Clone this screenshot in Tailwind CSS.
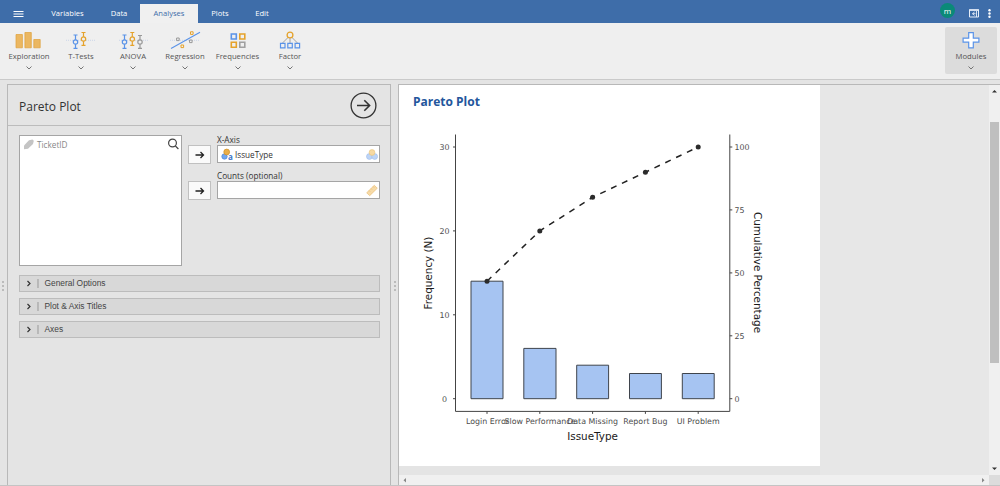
<!DOCTYPE html>
<html lang="en">
<head>
    <meta charset="UTF-8">
    <meta name="viewport" content="width=device-width, initial-scale=1.0">
    <title>Pareto Plot</title>
    <script src="https://cdn.jsdelivr.net/npm/@tailwindcss/browser@4"></script>
</head>
<body class="flex flex-col w-[1000px] h-[486px] overflow-hidden bg-[#e4e4e4] font-['Open_Sans',sans-serif] text-[#333]">

    <!-- Top bar -->
    <header class="flex h-[23px] shrink-0 bg-[#3e6da9] text-white text-[7.6px] font-medium leading-[19px]">
        <svg class="w-[37px] h-[23px]" viewBox="0 0 37 23" stroke="#fff" stroke-width="1.1"><path d="M13.500 11.500h10M13.500 14h10M13.500 16.500h10"/></svg>
        <nav class="flex pt-1">
            <span class="w-[61px] text-center">Variables</span>
            <span class="w-[42px] text-center">Data</span>
            <span class="w-[58px] text-center bg-[#f0f0f0] text-[#3e6da9]">Analyses</span>
            <span class="w-[44px] text-center">Plots</span>
            <span class="w-[40px] text-center">Edit</span>
        </nav>
        <div class="ml-auto flex">
            <div class="mt-[3px] mr-[11px] size-[15px] rounded-full bg-[#0a8a78] text-center text-[8px] leading-[15px]">m</div>
            <svg class="w-[34px] h-[23px]" viewBox="966 0 34 23" fill="none" stroke="#e6eef8">
                <path d="M969.500 10h9v7h-9z"/><path d="M969 10h10" stroke-width="1.500"/><path d="M976.500 11v6M974.500 12l-2 1.700 2 1.700M972.500 13.700h3" stroke-width=".9"/>
                <g fill="#fff" stroke="none"><circle cx="989.500" cy="10.200" r="1.200"/><circle cx="989.500" cy="13.500" r="1.200"/><circle cx="989.500" cy="16.800" r="1.200"/></g>
            </svg>
        </div>
    </header>

    <!-- Ribbon -->
    <div class="flex h-[57px] shrink-0 bg-[#efefef] border-b border-[#cacaca] pl-[3px] pr-[3px] pt-1 text-[7.7px] leading-[12px] text-[#555]">
        <div class="flex flex-col items-center w-[52px] pt-[3px]">
            <svg class="w-8 h-5" viewBox="0 0 32 20" fill="#ebb761" stroke="#e0a03a" stroke-width=".7"><path d="M3 4.500h6.400v13.300H3zM11.900 2.500h6.400v15.300h-6.400zM20.800 9.500h6.400v8.300h-6.400z"/></svg>
            <span>Exploration</span>
            <svg class="w-2 h-3 -mt-px" viewBox="0 0 8 12" fill="none" stroke="#666" stroke-width=".9"><path d="M1.500 5.500 4 8l2.500-2.500"/></svg>
        </div>
        <div class="flex flex-col items-center w-[52px] pt-[3px]">
            <svg class="w-8 h-5" viewBox="0 0 32 20" fill="none" stroke-width="1.200">
                <path d="M1 10.300h30" stroke="#b4c5e2" stroke-width=".6" stroke-dasharray="1 1"/>
                <g stroke="#5a93e8" fill="#efefef"><path d="M8.500 5h4M10.500 5v13M8.500 18.400h4"/><circle cx="10.500" cy="12" r="2.200"/></g>
                <g stroke="#e5a22b" fill="#efefef"><path d="M16.500 2.500h4M18.500 2.500v12.500M16.500 15.400h4"/><circle cx="18.500" cy="9" r="2.200"/></g>
            </svg>
            <span>T-Tests</span>
            <svg class="w-2 h-3 -mt-px" viewBox="0 0 8 12" fill="none" stroke="#666" stroke-width=".9"><path d="M1.500 5.500 4 8l2.500-2.500"/></svg>
        </div>
        <div class="flex flex-col items-center w-[52px] pt-[3px]">
            <svg class="w-8 h-5" viewBox="0 0 32 20" fill="none" stroke-width="1.200">
                <path d="M2 10.300h29" stroke="#b4c5e2" stroke-width=".6" stroke-dasharray="1 1"/>
                <g stroke="#5a93e8" fill="#efefef"><path d="M5.500 5h4M7.500 5v13M5.500 18.400h4"/><circle cx="7.500" cy="12" r="2.200"/></g>
                <g stroke="#e5a22b" fill="#efefef"><path d="M13.300 2.500h4M15.300 2.500v12.500M13.300 15.400h4"/><circle cx="15.300" cy="9" r="2.200"/></g>
                <g stroke="#999" fill="#efefef"><path d="M21 5.500h4M23 5.500v12.500M21 18.400h4"/><circle cx="23" cy="12" r="2.200"/></g>
            </svg>
            <span>ANOVA</span>
            <svg class="w-2 h-3 -mt-px" viewBox="0 0 8 12" fill="none" stroke="#666" stroke-width=".9"><path d="M1.500 5.500 4 8l2.500-2.500"/></svg>
        </div>
        <div class="flex flex-col items-center w-[52px] pt-[3px]">
            <svg class="w-8 h-5" viewBox="0 0 32 20" fill="none">
                <path d="M1 10.300h30" stroke="#b4c5e2" stroke-width=".6" stroke-dasharray="1 1"/>
                <path d="M2 18.500 31 2.200" stroke="#5a93e8" stroke-width="1.100"/>
                <path d="M21.500 1.800h2.600v2.600h-2.600zM12 15h2.600v2.600H12z" stroke="#e5a22b"/>
                <path d="M7.600 8h2.600v2.600H7.600zM20.500 10h2.600v2.600h-2.600z" stroke="#999"/>
            </svg>
            <span>Regression</span>
            <svg class="w-2 h-3 -mt-px" viewBox="0 0 8 12" fill="none" stroke="#666" stroke-width=".9"><path d="M1.500 5.500 4 8l2.500-2.500"/></svg>
        </div>
        <div class="flex flex-col items-center w-[53px] pt-[3px]">
            <svg class="w-8 h-5" viewBox="0 0 32 20" fill="none" stroke-width="1.600">
                <path d="M9.300 4h5v5h-5z" stroke="#5a93e8"/><path d="M17.800 4h5v5h-5zM9.300 12.300h5v5h-5z" stroke="#e5a22b"/><path d="M17.800 12.300h5v5h-5z" stroke="#a0a0a0"/>
            </svg>
            <span>Frequencies</span>
            <svg class="w-2 h-3 -mt-px" viewBox="0 0 8 12" fill="none" stroke="#666" stroke-width=".9"><path d="M1.500 5.500 4 8l2.500-2.500"/></svg>
        </div>
        <div class="flex flex-col items-center w-[52px] pt-[3px]">
            <svg class="w-8 h-5" viewBox="0 0 32 20" fill="none">
                <path d="M14 7.500 8.500 13M16 8v5M18 7.500l5.500 5.500" stroke="#999" stroke-width=".9"/>
                <circle cx="16" cy="5" r="2.900" stroke="#e5a22b" stroke-width="1.300"/>
                <path d="M6.500 13.300H11v4.500H6.500zM13.800 13.300h4.500v4.500h-4.500zM21.100 13.300h4.500v4.500h-4.500z" stroke="#5a93e8" stroke-width="1.200"/>
            </svg>
            <span>Factor</span>
            <svg class="w-2 h-3 -mt-px" viewBox="0 0 8 12" fill="none" stroke="#666" stroke-width=".9"><path d="M1.500 5.500 4 8l2.500-2.500"/></svg>
        </div>
        <div class="ml-auto flex flex-col items-center w-[52px] h-[47px] pt-[3px] bg-[#dcdcdc] rounded-[2px]">
            <svg class="w-8 h-5" viewBox="0 0 32 20" fill="#fff" stroke="#5a93e8" stroke-width="1.200"><path d="M13.700 2.600h4.600v5.600h5.600v4h-5.600v5.600h-4.600v-5.600H8.100v-4h5.600z"/></svg>
            <span>Modules</span>
            <svg class="w-2 h-3 -mt-px" viewBox="0 0 8 12" fill="none" stroke="#666" stroke-width=".9"><path d="M1.500 5.500 4 8l2.500-2.500"/></svg>
        </div>
    </div>

    <main class="flex h-[406px] pt-1 border-b border-[#c4c4c4]">
        <div class="w-[7px] pt-[197px]">
            <div class="flex flex-col gap-[2px] pl-[2px]"><i class="size-[2px] bg-[#bbb]"></i><i class="size-[2px] bg-[#bbb]"></i><i class="size-[2px] bg-[#bbb]"></i></div>
        </div>

        <!-- Options panel -->
        <section class="w-[384px] border-t border-l border-r border-[#b8b8b8]">
            <div class="flex justify-between h-[41px] border-b border-[#bcbcbc] pl-[11px] pr-[13px]">
                <h1 class="text-[12px] leading-[43px]">Pareto Plot</h1>
                <svg class="mt-[7px] size-[27px]" viewBox="0 0 27 27" fill="none" stroke="#333" stroke-width="1.300"><circle cx="13.500" cy="13.500" r="12.400"/><path d="M7 13.500h12.500M14.300 8.200l5.300 5.300-5.300 5.300" stroke-width="1.600"/></svg>
            </div>
            <div class="flex pl-[11px] pt-[9px]">
                <div class="w-[163px] h-[131px] bg-white border border-[#a5a5a5] flex text-[8.200px] text-[#888]">
                    <svg class="w-[17px] h-4 shrink-0" viewBox="0 0 17 16" fill="#c4c4c4"><path d="m4 9.500 5-5.300 3.500-.7 1.300 1.200-.8 3.300L8 12.800l-4 .4z"/></svg>
                    <span class="leading-[18px]">TicketID</span>
                    <svg class="ml-auto mr-[2px] mt-[2px] size-3" viewBox="0 0 12 12" fill="none" stroke="#444" stroke-width="1.200"><circle cx="5.500" cy="5" r="3.900"/><path d="m8.400 8 3 3"/></svg>
                </div>
                <div class="flex flex-col ml-[6px] pt-[10px] gap-[17px]">
                    <div class="w-[23px] h-[19px] bg-[#fafafa] border border-[#c0c0c0]"><svg class="w-[21px] h-[17px]" viewBox="0 0 21 17" fill="none" stroke="#222" stroke-width="1.300"><path d="M6.500 9h8M11.500 6l3 3-3 3"/></svg></div>
                    <div class="w-[23px] h-[19px] bg-[#fafafa] border border-[#c0c0c0]"><svg class="w-[21px] h-[17px]" viewBox="0 0 21 17" fill="none" stroke="#222" stroke-width="1.300"><path d="M6.500 9h8M11.500 6l3 3-3 3"/></svg></div>
                </div>
                <div class="ml-[6px] text-[8.200px] leading-[10px]">
                    <div>X-Axis</div>
                    <div class="flex w-[163px] h-[18px] bg-white border border-[#a5a5a5]">
                        <svg class="w-[17px] h-4 shrink-0" viewBox="0 0 17 16"><g stroke="#4a86d8" fill="#72a7ee" stroke-width=".7"><circle cx="6.500" cy="10.500" r="2.700"/></g><circle cx="8.700" cy="6" r="2.900" fill="#e9ae48" stroke="#cf8f25" stroke-width=".7"/><text x="10" y="13.500" font-size="8" font-weight="700" fill="#3e78c8">a</text></svg>
                        <span class="leading-[18px]">IssueType</span>
                        <svg class="ml-auto mr-[1px] w-3 h-4" viewBox="0 0 12 16" stroke-width=".6"><g fill="#bdd4f6" stroke="#9dbdec"><circle cx="3.400" cy="10.500" r="2.900"/><circle cx="8.700" cy="10.500" r="2.900"/></g><circle cx="6" cy="6.500" r="2.900" fill="#f6d9a2" stroke="#e9c27a"/></svg>
                    </div>
                    <div class="mt-[8px]">Counts (optional)</div>
                    <div class="flex justify-end w-[163px] h-[18px] bg-white border border-[#a5a5a5]">
                        <svg class="mr-[1px] w-3 h-4" viewBox="0 0 12 16" fill="#f7dba8" stroke="#e9bf78" stroke-width=".7"><path d="M.700 10.800 8.300 3.300l3 2.900-7.600 7.500zM3 8.500l1.300 1.300M5 6.500l1.300 1.300M7 4.500l1.300 1.300"/></svg>
                    </div>
                </div>
            </div>
            <div class="flex flex-col gap-[6px] mt-[9px] ml-[11px] w-[361px] font-['Liberation_Sans',sans-serif] text-[8.400px] leading-[15px] text-[#444]">
                <div class="flex items-center h-[17px] bg-[#d8d8d8] border border-[#bcbcbc]"><svg class="w-[24.500px] h-[15px]" viewBox="0 0 24.5 15" fill="none" stroke="#333" stroke-width="1.200"><path d="m7.500 5 2.500 2.500L7.500 10"/><path d="M18 3v9" stroke="#999" stroke-width="1"/></svg><span>General Options</span></div>
                <div class="flex items-center h-[17px] bg-[#d8d8d8] border border-[#bcbcbc]"><svg class="w-[24.500px] h-[15px]" viewBox="0 0 24.5 15" fill="none" stroke="#333" stroke-width="1.200"><path d="m7.500 5 2.500 2.500L7.500 10"/><path d="M18 3v9" stroke="#999" stroke-width="1"/></svg><span>Plot &amp; Axis Titles</span></div>
                <div class="flex items-center h-[17px] bg-[#d8d8d8] border border-[#bcbcbc]"><svg class="w-[24.500px] h-[15px]" viewBox="0 0 24.5 15" fill="none" stroke="#333" stroke-width="1.200"><path d="m7.500 5 2.500 2.500L7.500 10"/><path d="M18 3v9" stroke="#999" stroke-width="1"/></svg><span>Axes</span></div>
            </div>
        </section>

        <div class="w-[7px] pt-[197px]">
            <div class="flex flex-col gap-[2px] pl-[3px]"><i class="size-[2px] bg-[#bbb]"></i><i class="size-[2px] bg-[#bbb]"></i><i class="size-[2px] bg-[#bbb]"></i></div>
        </div>

        <!-- Results -->
        <section class="flex-1 flex flex-col border-t border-l border-[#b8b8b8]">
            <div class="flex h-[390px]">
                <div class="w-[421px] h-[381px] bg-white">
                    <h2 class="h-[33px] pl-[14px] text-[12px] leading-[34px] font-bold text-[#23569c]">Pareto Plot</h2>
                    <svg class="w-[421px] h-[348px] font-['DejaVu_Sans',sans-serif]" viewBox="399 118 421 348" fill="none">
                        <g fill="#a6c4f2" stroke="#3f444c">
                            <path d="M471 281.200h32v117.500h-32zM523.800 348.400H556v50.300h-32.200zM576.700 365.200h31.900v33.500h-31.900zM629.500 373.500h31.900v25.200h-31.900zM682.300 373.500h31.900v25.200h-31.900z"/>
                        </g>
                        <path d="M455.500 134.500v276.900h274.300V134.500M453 398.700h2.500M453 314.800h2.500M453 230.900h2.500M453 147h2.500M729.800 398.700h2.500M729.800 335.800h2.500M729.800 272.900h2.500M729.800 209.900h2.500M729.800 147h2.500M487 411.400v2.500M539.800 411.400v2.500M592.600 411.400v2.500M645.400 411.400v2.500M698.200 411.400v2.500" stroke="#444"/>
                        <path d="M487 281.200 539.800 230.900 592.600 197.300 645.400 172.200 698.200 147" stroke="#222" stroke-width="1.500" stroke-dasharray="6 6"/>
                        <g fill="#2b2b2b"><circle cx="487" cy="281.200" r="2.500"/><circle cx="539.800" cy="230.900" r="2.500"/><circle cx="592.600" cy="197.300" r="2.500"/><circle cx="645.400" cy="172.200" r="2.500"/><circle cx="698.200" cy="147" r="2.500"/></g>
                        <g fill="#4d4d4d" font-size="7.900">
                            <g text-anchor="end"><text x="449.500" y="150">30</text><text x="449.500" y="233.800">20</text><text x="449.500" y="317.700">10</text><text x="447" y="401.600">0</text></g>
                            <text x="734.500" y="150">100</text><text x="734.500" y="212.800">75</text><text x="734.500" y="275.800">50</text><text x="734.500" y="338.700">25</text><text x="734.500" y="401.600">0</text>
                            <g text-anchor="middle"><text x="487.500" y="424">Login Error</text><text x="540" y="424">Slow Performance</text><text x="592.600" y="424">Data Missing</text><text x="645.400" y="424">Report Bug</text><text x="698.200" y="424">UI Problem</text></g>
                        </g>
                        <g fill="#1a1a1a" font-size="10.400" text-anchor="middle">
                            <text x="592.600" y="440">IssueType</text>
                            <text transform="translate(431.500 273) rotate(-90)">Frequency (N)</text>
                            <text transform="translate(753.500 272.500) rotate(90)">Cumulative Percentage</text>
                        </g>
                    </svg>
                </div>
                <div class="flex-1 bg-[#e7e7e7]"></div>
                <div class="w-[11px] bg-[#f0f0f0]">
                    <svg class="w-[11px] h-[390px]" viewBox="989 85 11 390"><path d="M990 122h9v241h-9z" fill="#bfbfbf"/><path d="m992 92.500 2.500-2.500 2.500 2.500zM992 467.500l2.500 2.500 2.500-2.500z" fill="#333"/></svg>
                </div>
            </div>
            <div class="flex h-[10px] bg-[#f0f0f0]">
                <svg class="w-[590px] h-[10px]" viewBox="399 475 590 10" fill="#888"><path d="m406 478-2.500 2.300 2.500 2.300zM982 478l2.500 2.300-2.500 2.300z"/></svg>
                <div class="flex-1 bg-[#dcdcdc]"></div>
            </div>
        </section>
    </main>
</body>
</html>
